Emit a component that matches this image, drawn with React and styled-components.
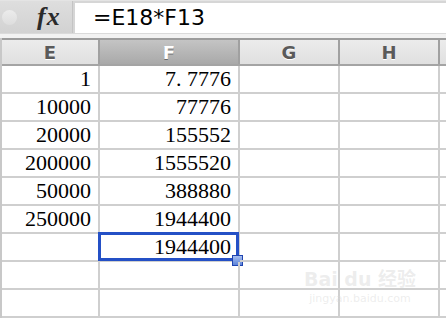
import styled, { createGlobalStyle } from "styled-components";

const GlobalStyle = createGlobalStyle`
  html, body {
    margin: 0;
    padding: 0;
    background: #ffffff;
  }
`;

const columns = [
  { id: "E", width: 98 },
  { id: "F", width: 140, selected: true },
  { id: "G", width: 100 },
  { id: "H", width: 100 },
  { id: "", width: 100 },
];

const rows = [
  ["1", "7. 7776"],
  ["10000", "77776"],
  ["20000", "155552"],
  ["200000", "1555520"],
  ["50000", "388880"],
  ["250000", "1944400"],
  ["", "1944400", true],
  ["", ""],
  ["", ""],
];

const App = () => {
  return (
    <Page>
      <GlobalStyle />
      <FormulaBar>
        <Controls>
          <RoundButton />
          <Fx>fx</Fx>
        </Controls>
        <FormulaInput>=E18*F13</FormulaInput>
      </FormulaBar>
      <Strip />
      <Sheet>
        <HeaderRow>
          {columns.map((col, i) => (
            <HeaderCell key={i} $w={col.width} $selected={col.selected}>
              {col.id}
            </HeaderCell>
          ))}
        </HeaderRow>
        {rows.map((row, i) => (
          <Row key={i}>
            {columns.map((col, j) => (
              <Cell key={j} $w={col.width}>
                {row[j] || ""}
                {j === 1 && row[2] && (
                  <Selection>
                    <Handle />
                  </Selection>
                )}
              </Cell>
            ))}
          </Row>
        ))}
      </Sheet>
      <Watermark>
        <span className="brand">Bai du 经验</span>
        <span className="url">jingyan.baidu.com</span>
      </Watermark>
    </Page>
  );
};

export default App;

const Page = styled.div`
  position: relative;
  width: 446px;
  height: 320px;
  overflow: hidden;
  background: #ffffff;
`;

const FormulaBar = styled.div`
  display: flex;
  height: 33px;
  background: #d6d6d6;
  border-top: 1px solid #e4e4e4;
  box-sizing: border-box;
`;

const Controls = styled.div`
  width: 73px;
  display: flex;
  align-items: center;
  gap: 20px;
  padding-left: 2px;
  box-sizing: border-box;
  border-right: 1px solid #c4c4c4;
  background: linear-gradient(#dedede, #d2d2d2);
`;

const RoundButton = styled.div`
  width: 15px;
  height: 15px;
  border-radius: 50%;
  background: linear-gradient(#ececec, #dddddd);
`;

const Fx = styled.span`
  font-family: "Liberation Serif", serif;
  font-style: italic;
  font-weight: bold;
  font-size: 26px;
  line-height: 30px;
  color: #2a2a2a;
  letter-spacing: 1px;
`;

const FormulaInput = styled.div`
  flex: 1;
  margin: 2px 0 0 2px;
  background: #ffffff;
  padding-left: 18px;
  font-family: "DejaVu Sans", sans-serif;
  font-size: 22px;
  line-height: 30px;
  color: #000000;
`;

const Strip = styled.div`
  height: 5px;
  background: #f2f2f2;
  border-top: 1px solid #dadada;
  box-sizing: border-box;
`;

const Sheet = styled.div`
  display: flex;
  flex-direction: column;
  border-left: 2px solid #c8c8c8;
`;

const HeaderRow = styled.div`
  display: flex;
  height: 28px;
  border-top: 2px solid #9c9c9c;
  border-bottom: 2px solid #a4a4a4;
  box-sizing: border-box;
`;

const HeaderCell = styled.div`
  flex: none;
  width: ${(p) => p.$w}px;
  box-sizing: border-box;
  border-right: 2px solid #a0a0a0;
  display: flex;
  align-items: center;
  justify-content: center;
  font-family: "DejaVu Sans", sans-serif;
  font-weight: bold;
  font-size: 18px;
  color: ${(p) => (p.$selected ? "#ffffff" : "#5a5a5a")};
  text-shadow: ${(p) =>
    p.$selected ? "0 1px 0 #6a6a6a" : "0 1px 0 #ffffff"};
  background: ${(p) =>
    p.$selected
      ? "linear-gradient(#c4c4c4, #a9a9a9)"
      : "linear-gradient(#ececec, #e0e0e0)"};
`;

const Row = styled.div`
  display: flex;
  height: 28px;
`;

const Cell = styled.div`
  position: relative;
  flex: none;
  width: ${(p) => p.$w}px;
  box-sizing: border-box;
  border-right: 2px solid #cfcfcf;
  border-bottom: 2px solid #cfcfcf;
  padding-right: 7px;
  text-align: right;
  font-family: "Liberation Serif", serif;
  font-size: 22px;
  line-height: 26px;
  color: #000000;
  white-space: nowrap;
`;

const Selection = styled.div`
  position: absolute;
  left: -2px;
  top: -2px;
  width: 141px;
  height: 29px;
  box-sizing: border-box;
  border: 3px solid #2450c6;
`;

const Handle = styled.div`
  position: absolute;
  left: 131px;
  top: 20px;
  width: 11px;
  height: 11px;
  box-sizing: border-box;
  border: 1px solid #1f44b0;
  background: linear-gradient(#a8c0f0, #5b82d8);
`;

const Watermark = styled.div`
  position: absolute;
  left: 300px;
  top: 266px;
  width: 120px;
  display: flex;
  flex-direction: column;
  align-items: center;
  font-family: "DejaVu Sans", "Noto Sans CJK SC", sans-serif;
  color: rgba(215, 215, 215, 0.45);
  pointer-events: none;

  .brand {
    font-size: 19px;
    font-weight: bold;
    line-height: 26px;
  }
  .url {
    font-size: 11px;
    line-height: 14px;
  }
`;
